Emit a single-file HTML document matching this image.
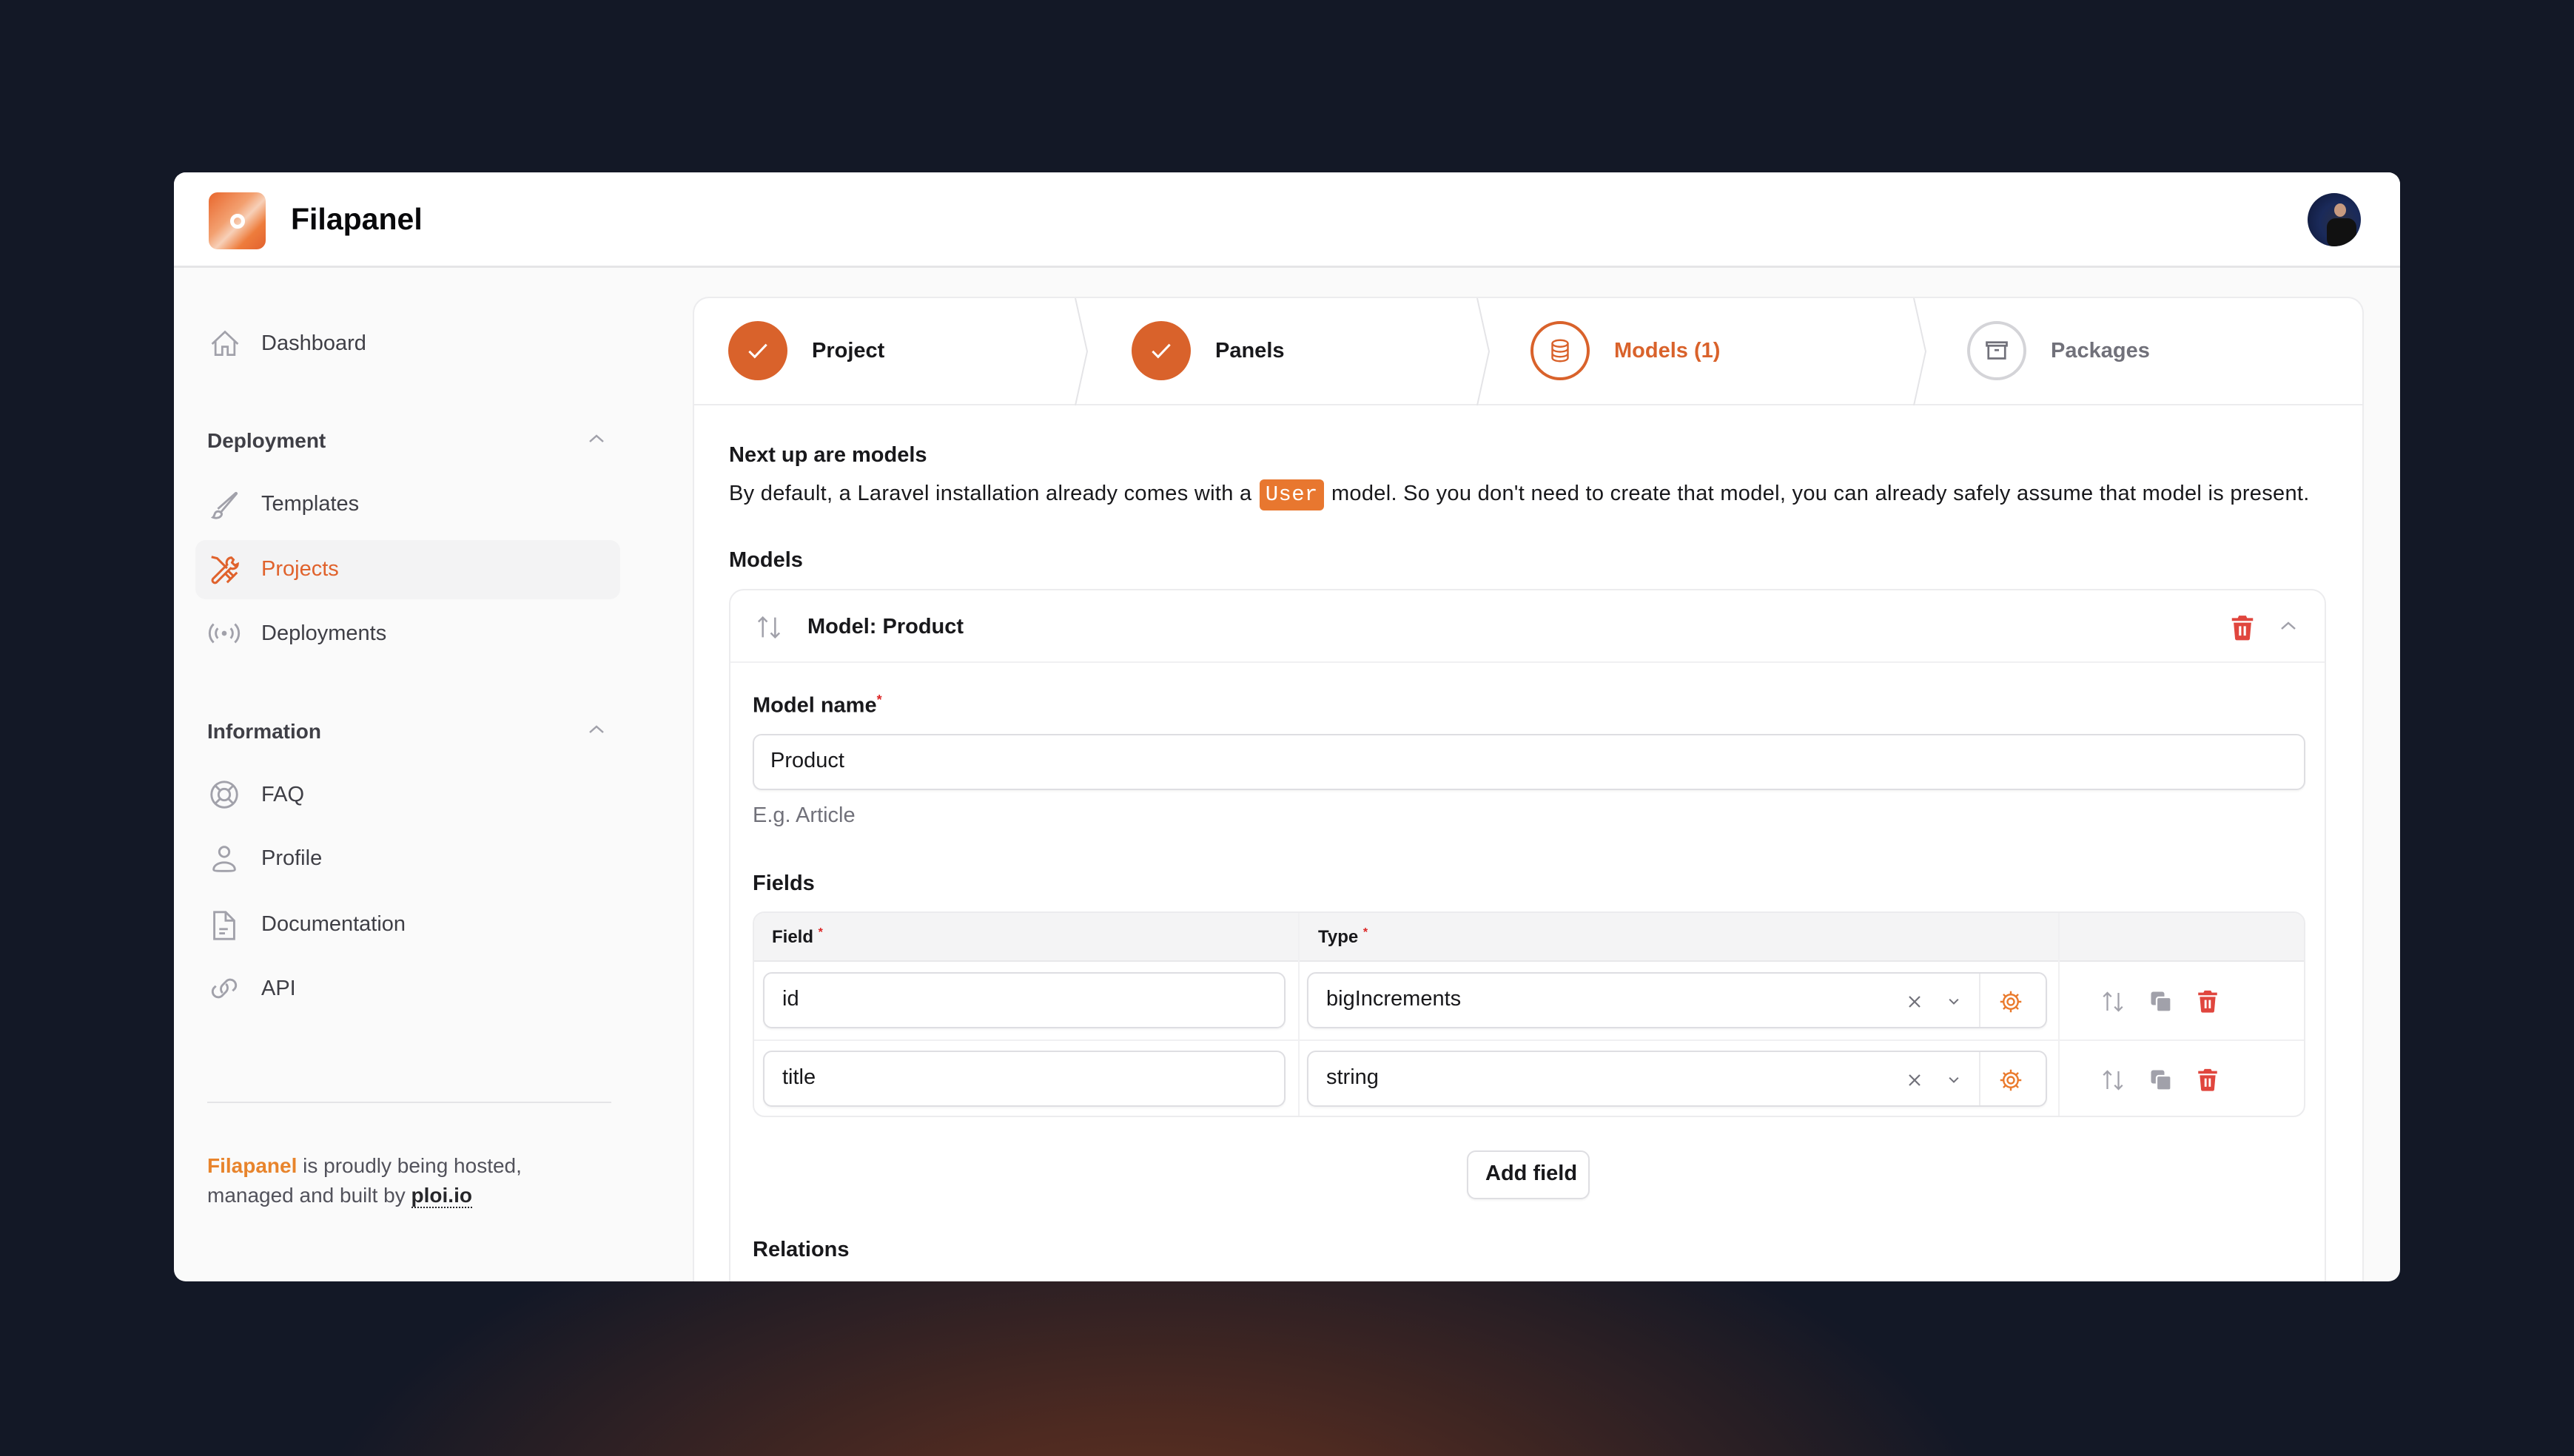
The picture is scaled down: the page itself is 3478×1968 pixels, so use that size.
<!DOCTYPE html>
<html style="overflow:hidden;width:3478px;height:1968px"><head><meta charset="utf-8"><style>
*{box-sizing:border-box;margin:0;padding:0}
body{width:3478px;height:1968px;overflow:hidden;background:#131826;font-family:"Liberation Sans",sans-serif;color:#18181b;position:relative}
.glow{position:absolute;left:0;top:1600px;width:3478px;height:368px;background:radial-gradient(ellipse 1150px 560px at 1560px 520px,rgba(100,52,33,1) 0%,rgba(88,45,32,.85) 35%,rgba(19,24,38,0) 100%)}
.win{position:absolute;left:235px;top:233px;width:3008px;height:1499px;background:#fafafa;border-radius:16px;overflow:hidden}
.hdr{position:absolute;left:0;top:0;width:100%;height:129px;background:#fff;border-bottom:3px solid #e5e5e7}
.a{position:absolute;white-space:nowrap}
.nav{font-size:29px;color:#3f3f46;font-weight:500}
.grp{font-size:28px;color:#3f3f46;font-weight:bold}
.ic{position:absolute}
.card{position:absolute;left:701px;top:168px;width:2258px;height:1331px;background:#fff;border:2px solid #ececee;border-bottom:none;border-radius:22px 22px 0 0;overflow:hidden}
.t{font-size:29px}
.b{font-weight:bold}
.inp{position:absolute;background:#fff;border:2px solid #dedee2;border-radius:12px;box-shadow:0 2px 2px rgba(0,0,0,.04)}
</style></head><body>
<div class="glow"></div>
<div class="win">
 <div class="hdr">
  <div class="a" style="left:47px;top:27px;width:77px;height:77px;border-radius:12px;background:linear-gradient(135deg,#e8662c 0%,#f3a070 40%,#f7d0b8 55%,#ee7c3c 75%,#e2612e 100%)"></div>
  <div class="a" style="left:76px;top:56px;width:20px;height:20px;border-radius:50%;border:5px solid #fff"></div>
  <div class="a" style="left:158px;top:40px;font-size:41px;font-weight:bold;color:#09090b">Filapanel</div>
  <div class="a" style="left:2883px;top:28px;width:72px;height:72px;border-radius:50%;background:radial-gradient(circle at 60% 55%,#2a2f44 0%,#1a2a5a 45%,#0d1430 100%);overflow:hidden"><div style="position:absolute;left:36px;top:14px;width:16px;height:18px;border-radius:50%;background:#c79a80"></div><div style="position:absolute;left:26px;top:34px;width:40px;height:40px;border-radius:12px;background:#111"></div></div>
 </div>
 <svg class="ic" style="left:47px;top:210px" width="44" height="44" viewBox="0 0 24 24" fill="none" stroke="#a1a1aa" stroke-width="1.5"><path d="M2.5 12 12 3l9.5 9M5 10v10h5v-6h4v6h5V10"/></svg>
 <div class="a nav" style="left:118px;top:215px">Dashboard</div>
 <div class="a grp" style="left:45px;top:347px">Deployment</div>
 <svg class="ic" style="left:558px;top:350px" width="26" height="20" viewBox="0 0 26 20" fill="none" stroke="#a1a1aa" stroke-width="2.5"><path d="M4 14 13 6l9 8"/></svg>
 <svg class="ic" style="left:45px;top:428px" width="46" height="46" viewBox="0 0 24 24" fill="none" stroke="#a1a1aa" stroke-width="1.5"><path d="M9.5 16.5c-1-1-2.6-1-3.6 0-.9.9-.5 2.3-1.9 3.5 2 .8 4.4.4 5.5-.8.9-1 1-2.1 0-2.7zM9.5 16.5 20.5 3.5c.4-.4 0-1-.5-.6L7.5 14"/></svg>
 <div class="a nav" style="left:118px;top:432px">Templates</div>
 <div class="a" style="left:29px;top:497px;width:574px;height:80px;background:#f3f3f4;border-radius:14px"></div>
 <svg class="ic" style="left:45px;top:514px" width="46" height="46" viewBox="0 0 24 24" fill="none" stroke="#e0622c" stroke-width="1.6"><path d="M3 3l4 1 7 7M14 21l7-7M17 3.5a3.5 3.5 0 0 0-3 5L4 18.5a1.8 1.8 0 0 0 2.5 2.5l10-10a3.5 3.5 0 0 0 5-3l-2 1-2-2 1-2zM13 15l3.5 3.5 2-2L15 13"/></svg>
 <div class="a nav" style="left:118px;top:520px;color:#e0622c">Projects</div>
 <svg class="ic" style="left:45px;top:600px" width="46" height="46" viewBox="0 0 24 24" fill="none" stroke="#a1a1aa" stroke-width="1.5"><path d="M4.5 5.5a9 9 0 0 0 0 13M19.5 5.5a9 9 0 0 1 0 13M7.5 8.5a5 5 0 0 0 0 7M16.5 8.5a5 5 0 0 1 0 7"/><circle cx="12" cy="12" r="1" fill="#a1a1aa"/></svg>
 <div class="a nav" style="left:118px;top:607px">Deployments</div>
 <div class="a grp" style="left:45px;top:740px">Information</div>
 <svg class="ic" style="left:558px;top:743px" width="26" height="20" viewBox="0 0 26 20" fill="none" stroke="#a1a1aa" stroke-width="2.5"><path d="M4 14 13 6l9 8"/></svg>
 <svg class="ic" style="left:45px;top:818px" width="46" height="46" viewBox="0 0 24 24" fill="none" stroke="#a1a1aa" stroke-width="1.5"><circle cx="12" cy="12" r="9"/><circle cx="12" cy="12" r="4"/><path d="M5.6 5.6l3.6 3.6M18.4 5.6l-3.6 3.6M5.6 18.4l3.6-3.6M18.4 18.4l-3.6-3.6"/></svg>
 <div class="a nav" style="left:118px;top:825px">FAQ</div>
 <svg class="ic" style="left:45px;top:905px" width="46" height="46" viewBox="0 0 24 24" fill="none" stroke="#a1a1aa" stroke-width="1.5"><circle cx="12" cy="7" r="3.5"/><path d="M4.5 19.5c0-3 3.5-5 7.5-5s7.5 2 7.5 5c0 1-3.5 1-7.5 1s-7.5 0-7.5-1z"/></svg>
 <div class="a nav" style="left:118px;top:911px">Profile</div>
 <svg class="ic" style="left:45px;top:995px" width="46" height="46" viewBox="0 0 24 24" fill="none" stroke="#a1a1aa" stroke-width="1.5"><path d="M5 2.5h8l6 6v13H5zM13 2.5v6h6M8.5 14.5h6M8.5 17.5h4"/></svg>
 <div class="a nav" style="left:118px;top:1000px">Documentation</div>
 <svg class="ic" style="left:45px;top:1080px" width="46" height="46" viewBox="0 0 24 24" fill="none" stroke="#a1a1aa" stroke-width="1.5"><path d="M13.2 8.8a4 4 0 0 1 0 5.6l-3 3a4 4 0 0 1-5.6-5.6l1.5-1.5M10.8 15.2a4 4 0 0 1 0-5.6l3-3a4 4 0 0 1 5.6 5.6l-1.5 1.5"/></svg>
 <div class="a nav" style="left:118px;top:1087px">API</div>
 <div class="a" style="left:45px;top:1256px;width:546px;height:2px;background:#e4e4e7"></div>
 <div class="a" style="left:45px;top:1323px;font-size:28px;line-height:40px;color:#52525b"><span style="color:#e8842c;font-weight:bold">Filapanel</span> is proudly being hosted,<br>managed and built by <span style="color:#27272a;font-weight:bold;border-bottom:2px dotted #27272a">ploi.io</span></div>

 <div class="card">
  <div class="a" style="left:0;top:143px;width:100%;height:2px;background:#ececee"></div>
  <svg class="a" style="left:0;top:0" width="2258" height="145" fill="none" stroke="#e4e4e7" stroke-width="2"><path d="M515 0l16 72-16 73M1058 0l16 72-16 73M1648 0l16 72-16 73"/></svg>
  <div class="a" style="left:46px;top:31px;width:80px;height:80px;border-radius:50%;background:#d9622b"></div>
  <svg class="a" style="left:66px;top:51px" width="40" height="40" viewBox="0 0 24 24" fill="none" stroke="#fff" stroke-width="1.8"><path d="M5 12.5l4.5 4.5L19 7"/></svg>
  <div class="a t" style="left:159px;top:55px;font-weight:600">Project</div>
  <div class="a" style="left:591px;top:31px;width:80px;height:80px;border-radius:50%;background:#d9622b"></div>
  <svg class="a" style="left:611px;top:51px" width="40" height="40" viewBox="0 0 24 24" fill="none" stroke="#fff" stroke-width="1.8"><path d="M5 12.5l4.5 4.5L19 7"/></svg>
  <div class="a t" style="left:704px;top:55px;font-weight:600">Panels</div>
  <div class="a" style="left:1130px;top:31px;width:80px;height:80px;border-radius:50%;border:4px solid #d9622b"></div>
  <svg class="a" style="left:1152px;top:53px" width="36" height="36" viewBox="0 0 24 24" fill="none" stroke="#d9622b" stroke-width="1.6"><ellipse cx="12" cy="5.5" rx="7" ry="3"/><path d="M5 5.5v13c0 1.7 3 3 7 3s7-1.3 7-3v-13M5 10c0 1.7 3 3 7 3s7-1.3 7-3M5 14.5c0 1.7 3 3 7 3s7-1.3 7-3"/></svg>
  <div class="a t" style="left:1243px;top:55px;color:#d9622b;font-weight:600">Models (1)</div>
  <div class="a" style="left:1720px;top:31px;width:80px;height:80px;border-radius:50%;border:4px solid #d4d4d8"></div>
  <svg class="a" style="left:1742px;top:53px" width="36" height="36" viewBox="0 0 24 24" fill="none" stroke="#71717a" stroke-width="1.8"><path d="M3 4.5h18v3H3zM4.5 7.5V19h15V7.5M10 11.5h4"/></svg>
  <div class="a t" style="left:1833px;top:55px;color:#71717a;font-weight:600">Packages</div>

  <div class="a t b" style="left:47px;top:196px">Next up are models</div>
  <div class="a t" style="left:47px;top:245px;letter-spacing:0.3px">By default, a Laravel installation already comes with a <span style="display:inline-block;background:#e8772f;color:#fff;font-family:'Liberation Mono',monospace;padding:3px 8px;border-radius:6px;line-height:36px;margin:0 2px">User</span> model. So you don't need to create that model, you can already safely assume that model is present.</div>
  <div class="a t" style="left:47px;top:338px;font-weight:600">Models</div>

  <div class="a" style="left:47px;top:393px;width:2158px;height:1100px;border:2px solid #ececee;border-radius:20px;background:#fff">
   <div class="a" style="left:0;top:96px;width:100%;height:2px;background:#f0f0f2"></div>
   <svg class="a" style="left:32px;top:30px" width="40" height="40" viewBox="0 0 24 24" fill="none" stroke="#a1a1aa" stroke-width="1.5"><path d="M7 20V4M3.5 7.5 7 4l3.5 3.5M17 4v16M13.5 16.5 17 20l3.5-3.5"/></svg>
   <div class="a t" style="left:104px;top:33px;font-weight:600">Model: Product</div>
   <svg class="a" style="left:2024px;top:30px" width="38" height="40" viewBox="0 0 24 24" fill="#e0463e"><path d="M9 2h6l1 2h5v2.5H3V4h5zM4.5 8h15l-1.2 13.5a1.5 1.5 0 0 1-1.5 1.5H7.2a1.5 1.5 0 0 1-1.5-1.5zM9 11v8h2v-8zm4 0v8h2v-8z"/></svg>
   <svg class="a" style="left:2092px;top:38px" width="26" height="20" viewBox="0 0 26 20" fill="none" stroke="#a1a1aa" stroke-width="2.5"><path d="M4 14 13 6l9 8"/></svg>

   <div class="a t" style="left:30px;top:138px;font-weight:600">Model name<sup style="color:#dc2626;font-size:18px">*</sup></div>
   <div class="inp" style="left:30px;top:194px;width:2098px;height:76px"></div>
   <div class="a t" style="left:54px;top:214px">Product</div>
   <div class="a t" style="left:30px;top:288px;color:#71717a">E.g. Article</div>
   <div class="a t" style="left:30px;top:380px;font-weight:600">Fields</div>

   <div class="a" style="left:30px;top:434px;width:2098px;height:278px;border:2px solid #ececee;border-radius:16px;overflow:hidden">
    <div class="a" style="left:0;top:0;width:100%;height:66px;background:#f4f4f5;border-bottom:2px solid #e8e8ea"></div>
    <div class="a" style="left:0;top:171px;width:100%;height:2px;background:#f0f0f2"></div>
    <div class="a" style="left:735px;top:0;width:2px;height:100%;background:#f0f0f2"></div>
    <div class="a" style="left:1762px;top:0;width:2px;height:100%;background:#f0f0f2"></div>
    <div class="a" style="left:24px;top:18px;font-size:24px;font-weight:600">Field <sup style="color:#dc2626;font-size:16px">*</sup></div>
    <div class="a" style="left:762px;top:18px;font-size:24px;font-weight:600">Type <sup style="color:#dc2626;font-size:16px">*</sup></div>
   </div>
   <div class="inp" style="left:44px;top:516px;width:706px;height:76px"></div>
   <div class="a t" style="left:70px;top:536px">id</div>
   <div class="inp" style="left:779px;top:516px;width:1000px;height:76px"><div style="position:absolute;left:906px;top:0;width:2px;height:100%;background:#ececee"></div></div>
   <div class="a t" style="left:805px;top:536px">bigIncrements</div>
   <svg class="a" style="left:1588px;top:544px" width="24" height="24" viewBox="0 0 24 24" stroke="#71717a" stroke-width="2.2"><path d="M5 5l14 14M19 5 5 19"/></svg>
   <svg class="a" style="left:1642px;top:546px" width="22" height="20" viewBox="0 0 24 24" fill="none" stroke="#71717a" stroke-width="2.4"><path d="M5 8l7 7 7-7"/></svg>
   <svg class="a" style="left:1712px;top:538px" width="36" height="36" viewBox="0 0 24 24" fill="none" stroke="#ea7a2c" stroke-width="1.6"><circle cx="12" cy="12" r="3"/><path d="M12 2.5v3M12 18.5v3M2.5 12h3M18.5 12h3M5.3 5.3l2.1 2.1M16.6 16.6l2.1 2.1M5.3 18.7l2.1-2.1M16.6 7.4l2.1-2.1"/><circle cx="12" cy="12" r="6.5"/></svg>
   <svg class="a" style="left:1850px;top:538px" width="36" height="36" viewBox="0 0 24 24" fill="none" stroke="#a1a1aa" stroke-width="1.5"><path d="M7 20V4M3.5 7.5 7 4l3.5 3.5M17 4v16M13.5 16.5 17 20l3.5-3.5"/></svg>
   <svg class="a" style="left:1915px;top:538px" width="36" height="36" viewBox="0 0 24 24" fill="#a1a1aa"><rect x="3" y="3" width="12" height="12" rx="2"/><rect x="8" y="8" width="13" height="13" rx="2" stroke="#fff" stroke-width="1.5"/></svg>
   <svg class="a" style="left:1979px;top:536px" width="34" height="38" viewBox="0 0 24 24" fill="#e0463e"><path d="M9 2h6l1 2h5v2.5H3V4h5zM4.5 8h15l-1.2 13.5a1.5 1.5 0 0 1-1.5 1.5H7.2a1.5 1.5 0 0 1-1.5-1.5zM9 11v8h2v-8zm4 0v8h2v-8z"/></svg>
   <div class="inp" style="left:44px;top:622px;width:706px;height:76px"></div>
   <div class="a t" style="left:70px;top:642px">title</div>
   <div class="inp" style="left:779px;top:622px;width:1000px;height:76px"><div style="position:absolute;left:906px;top:0;width:2px;height:100%;background:#ececee"></div></div>
   <div class="a t" style="left:805px;top:642px">string</div>
   <svg class="a" style="left:1588px;top:650px" width="24" height="24" viewBox="0 0 24 24" stroke="#71717a" stroke-width="2.2"><path d="M5 5l14 14M19 5 5 19"/></svg>
   <svg class="a" style="left:1642px;top:652px" width="22" height="20" viewBox="0 0 24 24" fill="none" stroke="#71717a" stroke-width="2.4"><path d="M5 8l7 7 7-7"/></svg>
   <svg class="a" style="left:1712px;top:644px" width="36" height="36" viewBox="0 0 24 24" fill="none" stroke="#ea7a2c" stroke-width="1.6"><circle cx="12" cy="12" r="3"/><path d="M12 2.5v3M12 18.5v3M2.5 12h3M18.5 12h3M5.3 5.3l2.1 2.1M16.6 16.6l2.1 2.1M5.3 18.7l2.1-2.1M16.6 7.4l2.1-2.1"/><circle cx="12" cy="12" r="6.5"/></svg>
   <svg class="a" style="left:1850px;top:644px" width="36" height="36" viewBox="0 0 24 24" fill="none" stroke="#a1a1aa" stroke-width="1.5"><path d="M7 20V4M3.5 7.5 7 4l3.5 3.5M17 4v16M13.5 16.5 17 20l3.5-3.5"/></svg>
   <svg class="a" style="left:1915px;top:644px" width="36" height="36" viewBox="0 0 24 24" fill="#a1a1aa"><rect x="3" y="3" width="12" height="12" rx="2"/><rect x="8" y="8" width="13" height="13" rx="2" stroke="#fff" stroke-width="1.5"/></svg>
   <svg class="a" style="left:1979px;top:642px" width="34" height="38" viewBox="0 0 24 24" fill="#e0463e"><path d="M9 2h6l1 2h5v2.5H3V4h5zM4.5 8h15l-1.2 13.5a1.5 1.5 0 0 1-1.5 1.5H7.2a1.5 1.5 0 0 1-1.5-1.5zM9 11v8h2v-8zm4 0v8h2v-8z"/></svg>

   <div class="inp" style="left:995px;top:757px;width:166px;height:66px;border-radius:12px"></div>
   <div class="a t" style="left:1020px;top:772px;font-weight:600">Add field</div>
   <div class="a t" style="left:30px;top:875px;font-weight:600">Relations</div>
   <div class="a" style="left:30px;top:936px;width:2098px;height:60px;border:2px solid #ececee;border-radius:16px;background:#f4f4f5"></div>
  </div>
 </div>
</div>
</body></html>
